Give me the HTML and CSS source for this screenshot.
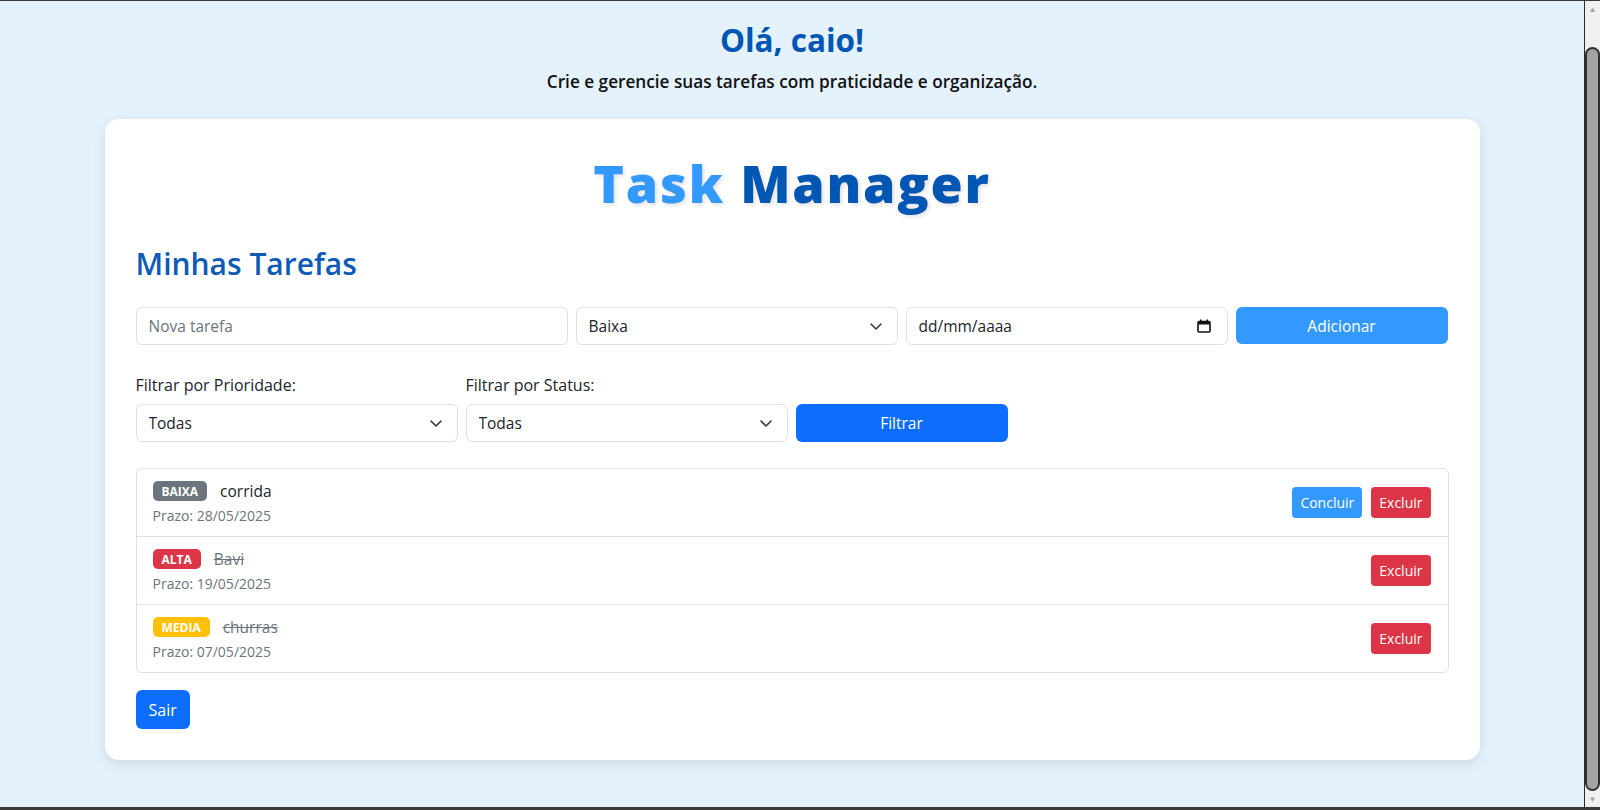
FILE: index.html
```html
<!DOCTYPE html>
<html lang="pt-BR">
<head>
<meta charset="utf-8">
<title>Task Manager</title>
<link rel="stylesheet" href="styles.css">
</head>
<body>
<div class="window">
  <div class="viewport">
    <header class="greeting">
      <h1 class="greeting-title">Olá, caio!</h1>
      <p class="greeting-sub">Crie e gerencie suas tarefas com praticidade e organização.</p>
    </header>

    <main class="card">
      <h1 class="brand"><span class="brand-task">Task</span> <span class="brand-manager">Manager</span></h1>
      <h2 class="section-title">Minhas Tarefas</h2>

      <form class="add-row">
        <div class="col col-4">
          <input class="control" type="text" placeholder="Nova tarefa">
        </div>
        <div class="col col-3 field">
          <select class="control select">
            <option>Baixa</option>
            <option>Media</option>
            <option>Alta</option>
          </select>
          <svg class="chevron" width="12" height="7" viewBox="0 0 12 7"><path d="M1 1l5 5 5-5" fill="none" stroke="#343a40" stroke-width="1.6" stroke-linecap="round" stroke-linejoin="round"/></svg>
        </div>
        <div class="col col-3 field">
          <input class="control date" type="text" placeholder="dd/mm/aaaa">
          <svg class="calendar" width="14" height="14" viewBox="0 0 14 14"><rect x="1" y="2.5" width="12" height="10.5" rx="1" fill="none" stroke="#111" stroke-width="1.6"/><rect x="1" y="2.5" width="12" height="3" fill="#111"/><rect x="3" y="0.5" width="1.6" height="2.5" fill="#111"/><rect x="9.4" y="0.5" width="1.6" height="2.5" fill="#111"/></svg>
        </div>
        <div class="col col-2">
          <button type="button" class="btn btn-light-blue btn-block">Adicionar</button>
        </div>
      </form>

      <div class="filter-row">
        <div class="col col-3">
          <label class="label">Filtrar por Prioridade:</label>
          <div class="field">
            <select class="control select">
              <option>Todas</option>
            </select>
            <svg class="chevron" width="12" height="7" viewBox="0 0 12 7"><path d="M1 1l5 5 5-5" fill="none" stroke="#343a40" stroke-width="1.6" stroke-linecap="round" stroke-linejoin="round"/></svg>
          </div>
        </div>
        <div class="col col-3">
          <label class="label">Filtrar por Status:</label>
          <div class="field">
            <select class="control select">
              <option>Todas</option>
            </select>
            <svg class="chevron" width="12" height="7" viewBox="0 0 12 7"><path d="M1 1l5 5 5-5" fill="none" stroke="#343a40" stroke-width="1.6" stroke-linecap="round" stroke-linejoin="round"/></svg>
          </div>
        </div>
        <div class="col col-2">
          <button type="button" class="btn btn-primary btn-block">Filtrar</button>
        </div>
      </div>

      <ul class="task-list">
        <li class="task">
          <div class="task-info">
            <div class="task-line">
              <span class="badge badge-gray">BAIXA</span>
              <span class="task-name">corrida</span>
            </div>
            <div class="task-due">Prazo: 28/05/2025</div>
          </div>
          <div class="task-actions">
            <button type="button" class="btn btn-sm btn-light-blue">Concluir</button>
            <button type="button" class="btn btn-sm btn-danger">Excluir</button>
          </div>
        </li>
        <li class="task">
          <div class="task-info">
            <div class="task-line">
              <span class="badge badge-red">ALTA</span>
              <span class="task-name done">Bavi</span>
            </div>
            <div class="task-due">Prazo: 19/05/2025</div>
          </div>
          <div class="task-actions">
            <button type="button" class="btn btn-sm btn-danger">Excluir</button>
          </div>
        </li>
        <li class="task">
          <div class="task-info">
            <div class="task-line">
              <span class="badge badge-yellow">MEDIA</span>
              <span class="task-name done">churras</span>
            </div>
            <div class="task-due">Prazo: 07/05/2025</div>
          </div>
          <div class="task-actions">
            <button type="button" class="btn btn-sm btn-danger">Excluir</button>
          </div>
        </li>
      </ul>

      <div class="footer-actions">
        <button type="button" class="btn btn-primary btn-exit">Sair</button>
      </div>
    </main>
  </div>
  <div class="scrollbar">
    <div class="scroll-arrow">&#9650;</div>
    <div class="scroll-track"><div class="scroll-thumb"></div></div>
    <div class="scroll-arrow">&#9660;</div>
  </div>
</div>
<div class="taskbar-edge"></div>
</body>
</html>
```

FILE: styles.css
```css
* { box-sizing: border-box; }

html, body {
  margin: 0;
  padding: 0;
  height: 810px;
  overflow: hidden;
}

body {
  font-family: "Open Sans", "Noto Sans", sans-serif;
  color: #212529;
  background: #3a3a3a;
  display: flex;
  flex-direction: column;
}

.window {
  margin-top: 1px;
  height: 806px;
  display: flex;
}

.viewport {
  flex: 1;
  background: #e3f2fd;
  display: flex;
  flex-direction: column;
  align-items: center;
}

.greeting {
  text-align: center;
  padding-top: 21px;
}

.greeting-title {
  margin: 0;
  font-size: 31.5px;
  line-height: 36px;
  font-weight: 700;
  color: #0056b3;
}

.greeting-sub {
  margin: 12px 0 0;
  font-size: 17.2px;
  line-height: 24px;
  font-weight: 600;
  color: #111;
}

.card {
  width: 1375px;
  margin-top: 25px;
  background: #fff;
  border-radius: 14px;
  box-shadow: 0 4px 14px rgba(0, 0, 0, 0.1);
  padding: 31px;
}

.brand {
  margin: 2px 0 0;
  text-align: center;
  font-size: 52px;
  line-height: 62px;
  font-weight: 800;
  letter-spacing: 1.8px;
  text-shadow: 2px 2px 4px rgba(0, 0, 0, 0.12);
}

.brand-task { color: #3399ff; }
.brand-manager { color: #0056b3; }

.section-title {
  margin: 32px 0 0;
  font-size: 30px;
  line-height: 36px;
  font-weight: 600;
  color: #0d5bb5;
}

.add-row,
.filter-row {
  display: flex;
  gap: 8px;
}

.add-row { margin-top: 25px; }

.filter-row {
  margin-top: 29px;
  align-items: flex-end;
}

.col-4 { width: 432px; }
.col-3 { width: 322px; }
.col-2 { width: 212px; }

.field { position: relative; }

.control {
  display: block;
  width: 100%;
  height: 38px;
  padding: 0 12px;
  border: 1px solid #dee2e6;
  border-radius: 6px;
  background: #fff;
  font-family: inherit;
  font-size: 15.5px;
  color: #212529;
  outline: none;
}

.control::placeholder { color: #6c757d; }
.control.date::placeholder { color: #212529; }

.select {
  appearance: none;
  -webkit-appearance: none;
}

.chevron {
  position: absolute;
  right: 16px;
  top: 16px;
  pointer-events: none;
}

.calendar {
  position: absolute;
  right: 17px;
  top: 12px;
  pointer-events: none;
}

.label {
  display: block;
  font-size: 16px;
  line-height: 22px;
  margin-bottom: 8px;
  color: #212529;
}

.btn {
  display: inline-flex;
  align-items: center;
  justify-content: center;
  height: 38px;
  padding: 0 12px;
  border: 0;
  border-radius: 6px;
  font-family: inherit;
  font-size: 15.5px;
  color: #fff;
  cursor: pointer;
}

.btn-block { width: 100%; }
.add-row .btn { height: 37px; }

.btn-light-blue { background: #3399ff; }
.btn-primary { background: #0d6efd; }
.btn-danger { background: #dc3545; }

.btn-sm {
  height: 31px;
  padding: 0 8px;
  font-size: 14px;
  border-radius: 4px;
}

.task-list {
  list-style: none;
  margin: 26px 0 0;
  padding: 0;
  border: 1px solid #dee2e6;
  border-radius: 6px;
}

.task {
  height: 67px;
  padding: 0 16px;
  display: flex;
  align-items: center;
  justify-content: space-between;
}

.task + .task {
  height: 68px;
  border-top: 1px solid #dee2e6;
}

.task-line {
  display: flex;
  align-items: center;
  height: 24px;
}

.badge {
  display: inline-flex;
  align-items: center;
  height: 20px;
  padding: 0 9px;
  border-radius: 5px;
  font-size: 12px;
  font-weight: 700;
  color: #fff;
  margin-right: 13px;
}

.badge-gray { background: #6c757d; }
.badge-red { background: #dc3545; }
.badge-yellow { background: #ffc107; }

.task-name {
  font-size: 15.5px;
  color: #212529;
}

.task-name.done {
  color: #6c757d;
  text-decoration: line-through;
}

.task-due {
  margin-top: 2px;
  font-size: 14px;
  line-height: 21px;
  color: #6c757d;
}

.task-actions {
  display: flex;
  gap: 9px;
  margin-right: 1px;
}

.footer-actions { margin-top: 17px; }
.btn-exit {
  height: 39px;
  font-size: 16px;
  padding: 0 13px;
}

.scrollbar {
  width: 16px;
  background: #f0f0f0;
  display: flex;
  flex-direction: column;
  border-left: 1px solid #2b2b2b;
}

.scroll-arrow {
  height: 16px;
  font-size: 8px;
  line-height: 16px;
  text-align: center;
  color: #a3a3a3;
}

.scroll-track {
  flex: 1;
  padding: 32px 0 2px;
  display: flex;
}

.scroll-thumb {
  flex: 1;
  margin: 0 2px 0 2px;
  background: #a3a3a3;
  border-radius: 6px;
  box-shadow: 0 0 0 2px #2f2f2f;
}

.taskbar-edge {
  height: 3px;
  background: #3a3a3a;
}
```
